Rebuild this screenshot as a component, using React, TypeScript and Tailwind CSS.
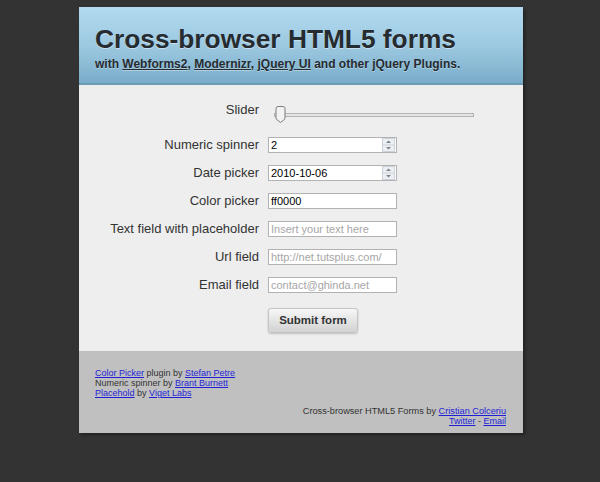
import React from "react";

const font = "font-['Liberation_Sans',Arial,Helvetica,sans-serif]";

function Spin() {
  return (
    <svg width="13" height="14" viewBox="0 0 13 14" className="mr-[1px] shrink-0">
      <rect x="0.5" y="0.5" width="12" height="13" fill="#eceff3" stroke="#cdd2d8" />
      <line x1="1" y1="7" x2="12" y2="7" stroke="#cdd2d8" />
      <path d="M4 5 L6.5 2.5 L9 5 Z" fill="#7a838e" />
      <path d="M4 9 L6.5 11.5 L9 9 Z" fill="#7a838e" />
    </svg>
  );
}

function Slider() {
  return (
    <svg width="206" height="18" viewBox="0 0 206 18" className="mt-[4px]">
      <rect x="6.5" y="7.5" width="199" height="3" fill="#e4e4e4" stroke="#b4b4b4" />
      <path
        d="M8 2.5 Q8 0.5 10 0.5 L15 0.5 Q17 0.5 17 2.5 L17 12 Q17 13.5 15 14.5 L12.5 16.5 L10 14.5 Q8 13.5 8 12 Z"
        fill="#f2f2f2"
        stroke="#7d7d7d"
      />
    </svg>
  );
}

function Field({
  label,
  value,
  placeholder,
  spin,
}: {
  label: string;
  value?: string;
  placeholder?: string;
  spin?: boolean;
}) {
  return (
    <div className="flex items-center h-[16px]">
      <div className="w-[189px] pr-[9px] text-right text-[13px] leading-[16px] text-[#333]">{label}</div>
      <div className="w-[129px] h-[16px] border border-[#b2b2b2] bg-white flex items-center justify-between pl-[2px]">
        <span className={"text-[11px] leading-[14px] " + (value ? "text-black" : "text-[#a6a6a6]")}>
          {value ?? placeholder}
        </span>
        {spin ? <Spin /> : null}
      </div>
    </div>
  );
}

export default function App() {
  const link = "text-[#1f1fd6] underline";
  return (
    <div className={"min-h-[482px] bg-[#333333] pt-[7px] " + font}>
      <div className="ml-[79px] w-[444px] shadow-[2px_2px_3px_rgba(0,0,0,0.35)]">
        <div className="bg-linear-to-b from-[#b1daef] via-[#9dc9e1] to-[#7aadca] border-b-2 border-[#6c9bb5] pt-[19px] pb-[12px] pl-[16px] text-[#262b30]">
          <h1 className="text-[26.3px] leading-[26px] font-bold [text-shadow:0_1px_0_rgba(255,255,255,0.45)]">
            Cross-browser HTML5 forms
          </h1>
          <p className="mt-[5px] text-[12px] leading-[14px] font-bold [text-shadow:0_1px_0_rgba(255,255,255,0.35)]">
            with <span className="underline">Webforms2</span>, <span className="underline">Modernizr</span>,{" "}
            <span className="underline">jQuery UI</span> and other jQuery Plugins.
          </p>
        </div>

        <div className="bg-[#eeeeee] pt-[17px] pb-[18px]">
          <div className="flex items-start h-[21px]">
            <div className="w-[189px] pr-[9px] text-right text-[13px] leading-[16px] text-[#333]">Slider</div>
            <Slider />
          </div>
          <div className="mt-[14px] flex flex-col gap-[12px]">
            <Field label="Numeric spinner" value="2" spin />
            <Field label="Date picker" value="2010-10-06" spin />
            <Field label="Color picker" value="ff0000" />
            <Field label="Text field with placeholder" placeholder="Insert your text here" />
            <Field label="Url field" placeholder="http://net.tutsplus.com/" />
            <Field label="Email field" placeholder="contact@ghinda.net" />
          </div>
          <div className="mt-[14px] pl-[189px]">
            <button className="w-[90px] h-[25px] rounded-[3px] border border-[#c4c4c4] bg-linear-to-b from-[#f7f7f7] to-[#d2d2d2] shadow-[0_1px_2px_rgba(0,0,0,0.2)] text-[11.5px] font-bold text-[#333]">
              Submit form
            </button>
          </div>
        </div>

        <div className="bg-[#c0c0c0] pt-[17px] pb-[7px] pl-[16px] pr-[17px] text-[9px] leading-[10px] text-[#333]">
          <div>
            <a className={link}>Color Picker</a> plugin by <a className={link}>Stefan Petre</a>
          </div>
          <div>
            Numeric spinner by <a className={link}>Brant Burnett</a>
          </div>
          <div>
            <a className={link}>Placehold</a> by <a className={link}>Viget Labs</a>
          </div>
          <div className="mt-[8px] text-right">
            <div className="text-[9.2px]">
              Cross-browser HTML5 Forms by <a className={link}>Cristian Colceriu</a>
            </div>
            <div>
              <a className={link}>Twitter</a> - <a className={link}>Email</a>
            </div>
          </div>
        </div>
      </div>
    </div>
  );
}
